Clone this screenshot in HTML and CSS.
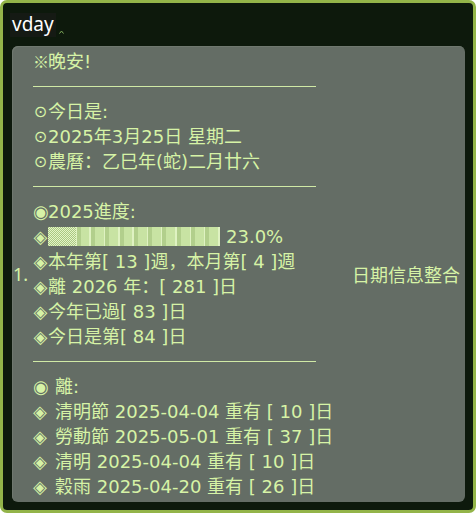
FILE: index.html
```html
<!DOCTYPE html>
<html lang="zh-Hans">
<head>
<meta charset="utf-8">
<link rel="stylesheet" href="styles.css">
</head>
<body>
<div class="frame">
  <div class="titlebar">
    <span class="title">vday</span>
    <svg class="caret" width="5" height="4" viewBox="0 0 5 4"><path d="M0.5 3.5 L2.5 1 L4.5 3.5" fill="none" stroke="#7fa85a" stroke-width="1"/></svg>
  </div>
  <div class="panel">
    <div class="num">1.</div>
    <div class="content">
      <div class="line"><span class="mk cjk">※</span>晚安!</div>
      <div class="line rule"></div>
      <div class="line"><span class="mk">⊙</span>今日是:</div>
      <div class="line"><span class="mk">⊙</span>2025年3月25日 星期二</div>
      <div class="line"><span class="mk">⊙</span>農曆：乙巳年(蛇)二月廿六</div>
      <div class="line rule"></div>
      <div class="line"><span class="mk big">◉</span>2025進度:</div>
      <div class="line"><span class="mk big">◈</span><span class="bar"><span class="bar-fill"></span></span>23.0%</div>
      <div class="line"><span class="mk big">◈</span>本年第[ 13 ]週，本月第[ 4 ]週</div>
      <div class="line"><span class="mk big">◈</span>離 2026 年：[ 281 ]日</div>
      <div class="line"><span class="mk big">◈</span>今年已過[ 83 ]日</div>
      <div class="line"><span class="mk big">◈</span>今日是第[ 84 ]日</div>
      <div class="line rule"></div>
      <div class="line"><span class="mk big sp">◉</span>離:</div>
      <div class="line"><span class="mk big sp">◈</span>清明節 2025-04-04 重有 [ 10 ]日</div>
      <div class="line"><span class="mk big sp">◈</span>勞動節 2025-05-01 重有 [ 37 ]日</div>
      <div class="line"><span class="mk big sp">◈</span>清明 2025-04-04 重有 [ 10 ]日</div>
      <div class="line"><span class="mk big sp">◈</span>穀雨 2025-04-20 重有 [ 26 ]日</div>
    </div>
    <div class="name">日期信息整合</div>
  </div>
</div>
</body>
</html>
```

FILE: styles.css
```css
html, body {
  margin: 0;
  padding: 0;
  background: #ffffff;
}
.frame {
  width: 476px;
  height: 513px;
  box-sizing: border-box;
  border: 3px solid #93b449;
  border-radius: 7px;
  background: #0d190c;
  padding: 0 8px 8px 9px;
  display: flex;
  flex-direction: column;
}
.titlebar {
  height: 43px;
  box-sizing: border-box;
  padding-top: 10px;
  display: flex;
  align-items: flex-start;
}
.title {
  display: block;
  margin-left: -2px;
  padding: 0 2px;
  height: 24px;
  line-height: 22px;
  background: #151a14;
  color: #ffffff;
  font-family: "Noto Sans", "Open Sans", sans-serif;
  font-size: 19px;
}
.caret {
  margin-left: 3px;
  margin-top: 17px;
}
.panel {
  flex: 1;
  background: #646d65;
  border-radius: 6px;
  box-shadow: inset 1px 1px 0 #6f786f;
  display: flex;
  align-items: center;
  color: #d6f3a6;
  font-family: "DejaVu Sans", "Noto Sans CJK SC", "Noto Sans CJK TC", sans-serif;
  font-size: 18px;
}
.num {
  width: 20px;
  padding-left: 1px;
  font-family: "Noto Sans", "Noto Sans CJK SC", sans-serif;
  line-height: 25px;
}
.line {
  height: 25px;
  line-height: 25px;
  white-space: nowrap;
}
.rule {
  width: 283px;
  position: relative;
}
.rule::after {
  content: "";
  display: block;
  position: absolute;
  left: 0;
  right: 0;
  top: 12px;
  height: 1px;
  background: #d0eaa6;
}
.mk {
  display: inline-block;
  width: 15px;
  text-align: center;
  font-family: "DejaVu Sans", sans-serif;
  font-size: 16px;
  vertical-align: top;
  overflow: visible;
}
.mk.big {
  font-size: 18px;
}
.mk.cjk {
  font-family: "Noto Sans CJK SC", sans-serif;
  font-size: 16px;
}
.mk.sp {
  width: 22px;
  text-align: left;
  padding-left: 0;
  box-sizing: border-box;
}
.bar {
  display: inline-block;
  width: 172px;
  height: 19px;
  vertical-align: -3px;
  margin-right: 6px;
  background-color: #c4e09e;
  background-image: repeating-linear-gradient(to right, #b2cf8c 0 4px, #c8e3a3 4px 12.8px, #dff2c2 12.8px 14.3px);
  position: relative;
}
.bar-fill {
  position: absolute;
  left: 0;
  top: 0;
  width: 28px;
  height: 19px;
  background-color: #c8e2a4;
  background-image: repeating-conic-gradient(#e4f5c8 0 25%, #aac882 0 50%);
  background-size: 2px 2px;
}
.name {
  margin-left: auto;
  padding-right: 5px;
  font-family: "Noto Sans CJK SC", sans-serif;
}
```
